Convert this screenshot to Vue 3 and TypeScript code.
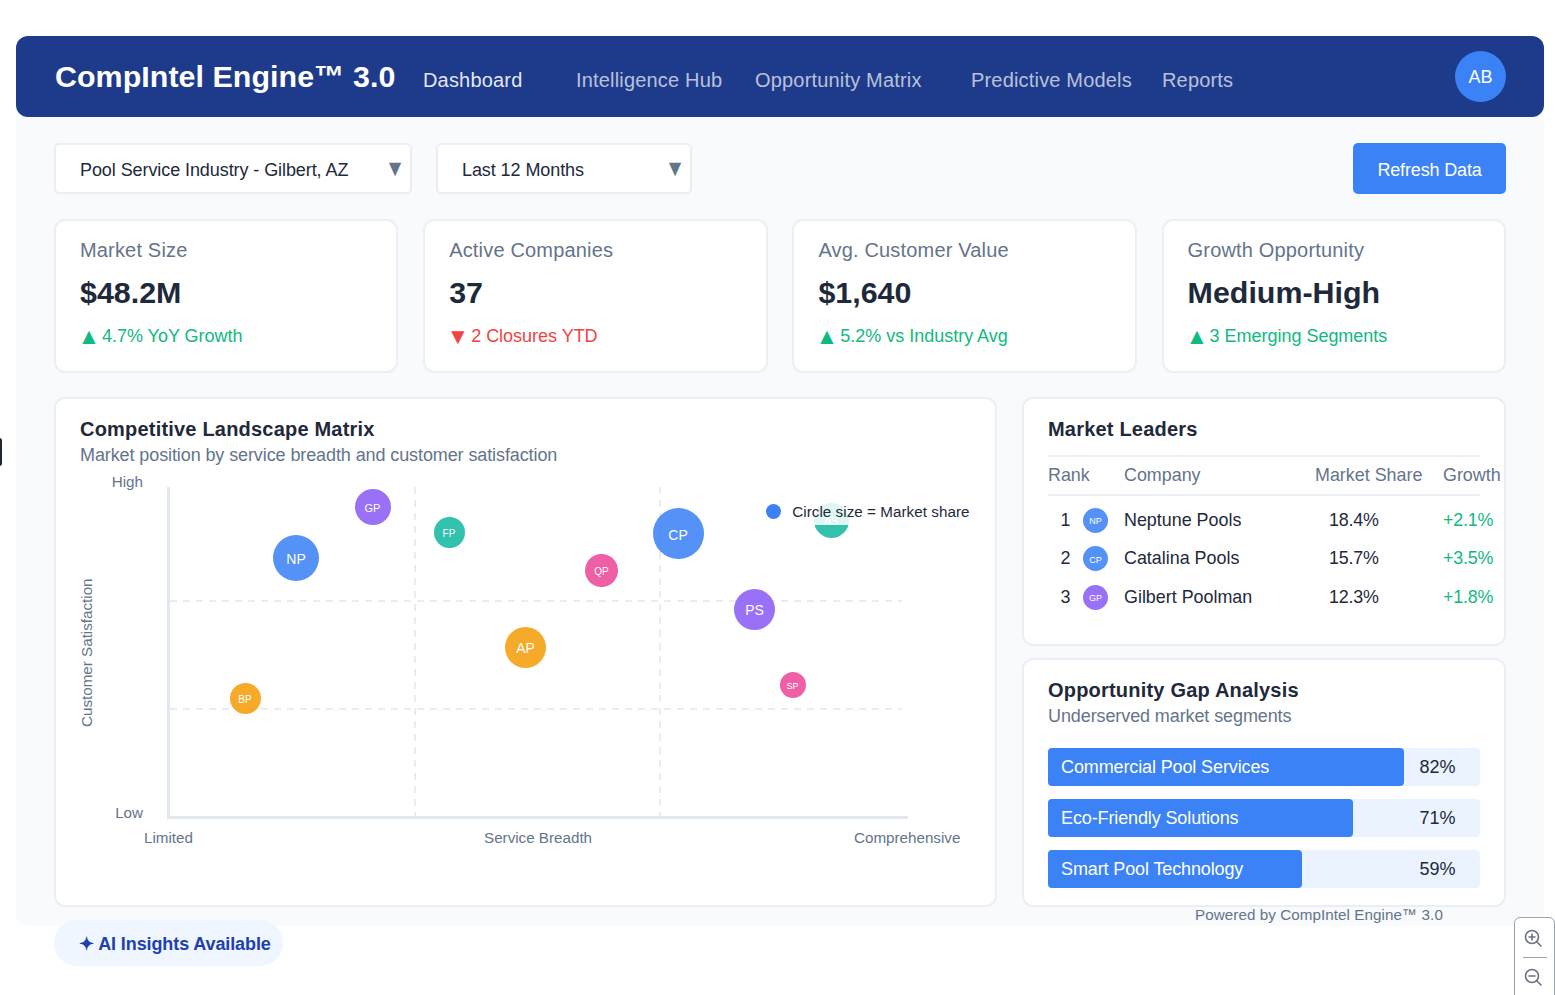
<script setup lang="ts">
interface Bubble { label: string; x: number; y: number; d: number; color: string; font: number }

const navItems = ['Dashboard', 'Intelligence Hub', 'Opportunity Matrix', 'Predictive Models', 'Reports']

const stats = [
  { title: 'Market Size', value: '$48.2M', arrow: '▲', change: '4.7% YoY Growth', down: false },
  { title: 'Active Companies', value: '37', arrow: '▼', change: '2 Closures YTD', down: true },
  { title: 'Avg. Customer Value', value: '$1,640', arrow: '▲', change: '5.2% vs Industry Avg', down: false },
  { title: 'Growth Opportunity', value: 'Medium-High', arrow: '▲', change: '3 Emerging Segments', down: false },
]

const blue = '#3b82f6'
const purple = '#8b5cf6'
const teal = '#14b8a0'
const orange = '#f59e0b'
const pink = '#ec4899'

// x / y are the bubble centres inside the plot box
const bubbles: Bubble[] = [
  { label: 'GP', x: 202.5, y: 20, d: 36, color: purple, font: 11 },
  { label: 'FP', x: 279, y: 45, d: 31, color: teal, font: 10 },
  { label: 'NP', x: 126, y: 71, d: 46, color: blue, font: 14 },
  { label: 'BP', x: 75, y: 211, d: 31, color: orange, font: 10 },
  { label: 'AP', x: 355.5, y: 160, d: 41, color: orange, font: 14 },
  { label: 'CP', x: 508, y: 46.5, d: 51, color: blue, font: 14 },
  { label: 'QP', x: 431.5, y: 83, d: 33, color: pink, font: 10 },
  { label: 'AS', x: 661, y: 33, d: 35, color: teal, font: 11 },
  { label: 'PS', x: 584.5, y: 122, d: 41, color: purple, font: 14 },
  { label: 'SP', x: 622.5, y: 198, d: 26, color: pink, font: 9 },
]

const leaders = [
  { rank: 1, short: 'NP', name: 'Neptune Pools', share: '18.4%', growth: '+2.1%', color: blue },
  { rank: 2, short: 'CP', name: 'Catalina Pools', share: '15.7%', growth: '+3.5%', color: blue },
  { rank: 3, short: 'GP', name: 'Gilbert Poolman', share: '12.3%', growth: '+1.8%', color: purple },
]

const gaps = [
  { name: 'Commercial Pool Services', pct: 82, fill: 356 },
  { name: 'Eco-Friendly Solutions', pct: 71, fill: 305 },
  { name: 'Smart Pool Technology', pct: 59, fill: 254 },
]
</script>

<template>
  <div class="page">
    <div class="edge-mark" />
    <div class="shell">
      <header class="topbar">
        <div class="logo">CompIntel Engine™ 3.0</div>
        <nav class="nav">
          <a v-for="(item, i) in navItems" :key="item" class="nav-item" :class="{ active: i === 0 }">{{ item }}</a>
        </nav>
        <div class="avatar">AB</div>
      </header>

      <main class="content">
        <div class="controls">
          <div class="select select-industry">Pool Service Industry - Gilbert, AZ<span class="caret">▼</span></div>
          <div class="select select-period">Last 12 Months<span class="caret">▼</span></div>
          <button class="refresh">Refresh Data</button>
        </div>

        <section class="stats">
          <div v-for="s in stats" :key="s.title" class="card stat">
            <div class="stat-title">{{ s.title }}</div>
            <div class="stat-value">{{ s.value }}</div>
            <div class="stat-change" :class="{ down: s.down }"><span class="arrow">{{ s.arrow }}</span> {{ s.change }}</div>
          </div>
        </section>

        <section class="panels">
          <div class="card matrix">
            <h2 class="card-title">Competitive Landscape Matrix</h2>
            <p class="card-sub">Market position by service breadth and customer satisfaction</p>

            <div class="chart">
              <span class="axis-label high">High</span>
              <span class="axis-label low">Low</span>
              <span class="axis-label y-title">Customer Satisfaction</span>
              <span class="axis-label limited">Limited</span>
              <span class="axis-label breadth">Service Breadth</span>
              <span class="axis-label comprehensive">Comprehensive</span>

              <div class="plot">
                <svg class="grid-lines" width="738" height="329">
                  <line x1="0" y1="114" x2="732" y2="114" />
                  <line x1="0" y1="222" x2="732" y2="222" />
                  <line x1="245" y1="0" x2="245" y2="329" />
                  <line x1="490" y1="0" x2="490" y2="329" />
                </svg>
                <div
                  v-for="b in bubbles"
                  :key="b.label"
                  class="bubble"
                  :style="{
                    left: b.x - b.d / 2 + 'px',
                    top: b.y - b.d / 2 + 'px',
                    width: b.d + 'px',
                    height: b.d + 'px',
                    background: b.color,
                    fontSize: b.font + 'px',
                  }"
                >{{ b.label }}</div>
              </div>

              <div class="legend"><span class="legend-dot" />Circle size = Market share</div>
            </div>
          </div>

          <div class="side">
            <div class="card leaders">
              <h2 class="card-title">Market Leaders</h2>
              <table class="leaders-table">
                <thead>
                  <tr>
                    <th class="col-rank">Rank</th>
                    <th class="col-company">Company</th>
                    <th class="col-share">Market Share</th>
                    <th class="col-growth">Growth</th>
                  </tr>
                </thead>
                <tbody>
                  <tr v-for="l in leaders" :key="l.rank">
                    <td class="col-rank">
                      <span class="rank-num">{{ l.rank }}</span>
                      <span class="mini-dot" :style="{ background: l.color }">{{ l.short }}</span>
                    </td>
                    <td class="col-company">{{ l.name }}</td>
                    <td class="col-share share-val">{{ l.share }}</td>
                    <td class="col-growth growth-val">{{ l.growth }}</td>
                  </tr>
                </tbody>
              </table>
            </div>

            <div class="card gaps">
              <h2 class="card-title">Opportunity Gap Analysis</h2>
              <p class="card-sub">Underserved market segments</p>
              <div class="gap-list">
                <div v-for="g in gaps" :key="g.name" class="gap-row">
                  <div class="gap-fill" :style="{ width: g.fill + 'px' }">{{ g.name }}</div>
                  <span class="gap-pct">{{ g.pct }}%</span>
                </div>
              </div>
            </div>
          </div>
        </section>
      </main>

      <div class="powered">Powered by CompIntel Engine™ 3.0</div>
      <div class="ai-pill">✦ AI Insights Available</div>
    </div>

    <div class="zoom-ctrl">
      <svg class="zoom-icon" width="20" height="20" viewBox="0 0 20 20" fill="none" stroke="#6b7280" stroke-width="1.6" stroke-linecap="round">
        <circle cx="9" cy="9" r="6.5" /><path d="M14 14l4 4M9 6v6M6 9h6" />
      </svg>
      <span class="zoom-sep" />
      <svg class="zoom-icon" width="20" height="20" viewBox="0 0 20 20" fill="none" stroke="#6b7280" stroke-width="1.6" stroke-linecap="round">
        <circle cx="9" cy="9" r="6.5" /><path d="M14 14l4 4M6 9h6" />
      </svg>
    </div>
  </div>
</template>

<style>
html, body { margin: 0; background: #fff; }
</style>

<style scoped>
.page {
  position: relative;
  height: 995px;
  overflow: hidden;
  padding-top: 36px;
  box-sizing: border-box;
  font-family: "Liberation Sans", Arial, sans-serif;
  color: #1e293b;
}

.edge-mark {
  position: absolute;
  left: -3px;
  top: 438px;
  width: 5px;
  height: 28px;
  border-radius: 3px;
  background: #1f2937;
}

.shell {
  position: relative;
  margin: 0 11px 0 16px;
  height: 890px;
  background: #f8fafc;
  border-radius: 12px;
}

/* ---- header ---- */
.topbar {
  display: flex;
  align-items: center;
  height: 81px;
  padding: 0 38px;
  background: #1e3a8a;
  border-radius: 12px;
  color: #fff;
}

.logo {
  box-sizing: border-box;
  padding-left: 1px;
  font-size: 30.4px;
  font-weight: 700;
  letter-spacing: 0.05px;
  width: 369px;
  white-space: nowrap;
}

.nav {
  display: grid;
  grid-template-columns: 153px 179px 216px 191px auto;
  margin-top: 8px;
}

.nav-item {
  font-size: 20px;
  letter-spacing: 0.18px;
  color: rgba(255, 255, 255, 0.7);
  white-space: nowrap;
}

.nav-item.active { color: rgba(255, 255, 255, 0.9); }

.avatar {
  margin-left: auto;
  width: 51px;
  height: 51px;
  padding-top: 2px;
  box-sizing: border-box;
  border-radius: 50%;
  background: #3b82f6;
  font-size: 18px;
  display: flex;
  align-items: center;
  justify-content: center;
}

/* ---- content ---- */
.content { padding: 26px 38px 0; }

.controls {
  display: flex;
  align-items: flex-start;
  gap: 24px;
  height: 51px;
}

.select {
  position: relative;
  box-sizing: border-box;
  height: 51px;
  line-height: 50px;
  padding-left: 24px;
  background: #fff;
  border: 2px solid #ebeff5;
  border-radius: 5px;
  font-size: 18px;
  letter-spacing: -0.08px;
  color: #1e293b;
}

.select-industry { width: 358px; }
.select-period { width: 256px; }

.caret {
  position: absolute;
  right: 7.5px;
  top: -1.5px;
  font-size: 16px;
  line-height: 50px;
  color: #64748b;
  transform: scale(1.3, 1.45);
}

.refresh {
  margin-left: auto;
  width: 153px;
  height: 51px;
  padding: 3px 0 0;
  border: 0;
  border-radius: 5px;
  background: #3b82f6;
  color: #fff;
  font: 18px "Liberation Sans", Arial, sans-serif;
  letter-spacing: -0.15px;
}

.card {
  box-sizing: border-box;
  background: #fff;
  border: 2px solid #ebeff5;
  border-radius: 11px;
}

.stats {
  display: grid;
  grid-template-columns: repeat(4, 1fr);
  gap: 24.8px;
  margin-top: 25px;
}

.stat {
  height: 153.5px;
  padding: 17px 24px 0;
}

.stat-title {
  font-size: 20px;
  line-height: 24px;
  letter-spacing: 0.17px;
  color: #64748b;
}

.stat-value {
  margin-top: 11px;
  font-size: 30.4px;
  line-height: 38px;
  font-weight: 700;
}

.stat-change {
  margin-top: 14px;
  font-size: 18px;
  line-height: 22px;
  letter-spacing: -0.02px;
  color: #10b981;
}

.stat-change.down { color: #ef4444; }

.arrow {
  display: inline-block;
  margin-right: -0.8px;
  transform: scale(1.25);
}

.panels {
  display: grid;
  grid-template-columns: 943px 484px;
  gap: 25px;
  margin-top: 24.5px;
}

.card-title {
  margin: 0;
  font-size: 20px;
  line-height: 24px;
  font-weight: 700;
  letter-spacing: 0.2px;
}

.card-sub {
  margin: 3px 0 0;
  font-size: 18px;
  line-height: 22px;
  letter-spacing: -0.1px;
  color: #64748b;
}

/* ---- matrix ---- */
.matrix {
  height: 510px;
  padding: 18px 24px 0;
}

.chart {
  position: relative;
  height: 400px;
  margin-top: 5px;
}

.axis-label {
  position: absolute;
  font-size: 15.2px;
  line-height: 18px;
  color: #64748b;
  white-space: nowrap;
}

.high { right: calc(100% - 63px); top: 2px; }
.low { right: calc(100% - 63px); top: 333px; }
.limited { left: 64px; top: 358px; }
.breadth { left: 404px; top: 358px; }
.comprehensive { left: 774px; top: 358px; }

.y-title {
  left: -2px;
  top: 256px;
  transform-origin: 0 0;
  transform: rotate(-90deg);
}

.plot {
  position: absolute;
  left: 87px;
  top: 16px;
  width: 741px;
  height: 332px;
  box-sizing: border-box;
  border-left: 3px solid #e2e8f0;
  border-bottom: 3px solid #e2e8f0;
}

.grid-lines {
  position: absolute;
  inset: 0;
}

.grid-lines line {
  stroke: #e2e8f0;
  stroke-width: 1.5;
  stroke-dasharray: 7 6;
}

.bubble {
  position: absolute;
  display: flex;
  align-items: center;
  justify-content: center;
  padding-top: 2px;
  box-sizing: border-box;
  border-radius: 50%;
  color: #fff;
  opacity: 0.87;
}

.legend {
  position: absolute;
  right: 0;
  top: 26px;
  display: flex;
  align-items: center;
  height: 28px;
  padding: 0 1.5px 0 10px;
  background: rgba(255, 255, 255, 0.85);
  font-size: 15.2px;
  letter-spacing: 0.05px;
  color: #1e293b;
}

.legend-dot {
  width: 15px;
  height: 15px;
  margin-right: 11.5px;
  border-radius: 50%;
  background: #3b82f6;
}

/* ---- side column ---- */
.side {
  display: flex;
  flex-direction: column;
  gap: 12px;
}

.leaders {
  height: 249px;
  padding: 18px 24px 0;
}

.leaders-table {
  display: block;
  margin-top: 14px;
  width: 432px;
  border-collapse: collapse;
  font-size: 17.9px;
}

.leaders-table thead {
  display: block;
}

.leaders-table thead tr {
  display: flex;
  height: 37px;
  align-items: center;
  border-top: 2px solid #ebeff5;
  border-bottom: 2px solid #ebeff5;
}

.leaders-table tbody {
  display: block;
  padding-top: 5px;
}

.leaders-table tbody tr {
  display: flex;
  align-items: center;
  height: 38.5px;
}

.leaders-table th {
  padding: 0;
  font-weight: 400;
  text-align: left;
  color: #64748b;
  white-space: nowrap;
}

.leaders-table td { padding: 0; white-space: nowrap; }

.col-rank { flex: none; width: 76px; display: flex; align-items: center; }
.col-company { flex: none; width: 191px; }
.col-share { flex: none; width: 128px; }
.col-growth { flex: none; width: 58px; }

.rank-num { width: 35px; text-align: center; }

.mini-dot {
  width: 25px;
  height: 25px;
  border-radius: 50%;
  display: flex;
  align-items: center;
  justify-content: center;
  padding-top: 2px;
  box-sizing: border-box;
  color: #fff;
  font-size: 9px;
  opacity: 0.87;
}

.leaders-table .share-val { padding-left: 14px; box-sizing: border-box; letter-spacing: -0.2px; }
.growth-val { color: #10b981; letter-spacing: -0.2px; }

.gaps {
  height: 249px;
  padding: 18px 24px 0;
}

.gap-list {
  display: flex;
  flex-direction: column;
  gap: 13px;
  margin-top: 21px;
}

.gap-row {
  position: relative;
  display: flex;
  height: 38px;
  background: #eaf3ff;
  border-radius: 4px;
  font-size: 18px;
  align-items: center;
}

.gap-fill {
  box-sizing: border-box;
  height: 100%;
  display: flex;
  align-items: center;
  padding-left: 13px;
  background: #3b82f6;
  border-radius: 4px;
  color: #fff;
  letter-spacing: -0.12px;
  white-space: nowrap;
}

.gap-pct {
  position: absolute;
  right: 24.5px;
}

/* ---- overlays ---- */
.powered {
  position: absolute;
  left: 1179px;
  top: 870px;
  font-size: 15.2px;
  line-height: 18px;
  letter-spacing: 0.07px;
  color: #64748b;
  white-space: nowrap;
}

.ai-pill {
  position: absolute;
  left: 38px;
  top: 884px;
  display: flex;
  align-items: center;
  box-sizing: border-box;
  height: 46px;
  padding: 2px 12px 0 25px;
  border-radius: 23px;
  background: #eff6ff;
  color: #1e40af;
  font-size: 18px;
  font-weight: 700;
  letter-spacing: -0.1px;
  white-space: nowrap;
}

.zoom-ctrl {
  position: absolute;
  left: 1514px;
  top: 917px;
  width: 41px;
  height: 100px;
  box-sizing: border-box;
  border: 1px solid #9ca3af;
  border-radius: 6px;
  background: #fff;
  display: flex;
  flex-direction: column;
  align-items: center;
  padding-top: 10px;
}

.zoom-icon { margin-left: -3px; }

.zoom-sep {
  width: 24px;
  height: 1px;
  margin: 9px 0 9px;
  background: #9ca3af;
}
</style>
